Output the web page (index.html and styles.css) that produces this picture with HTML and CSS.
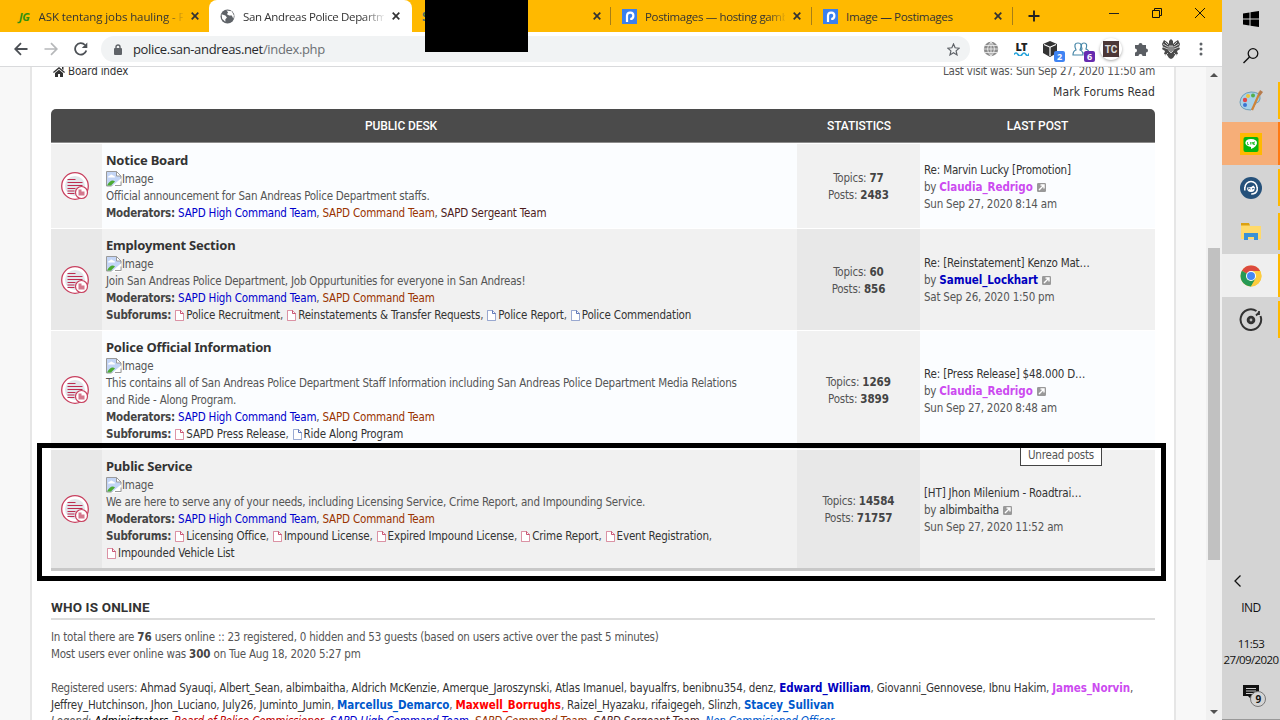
FILE: index.html
```html
<!DOCTYPE html>
<html lang="en">
<head>
    <meta charset="UTF-8">
    <meta name="viewport" content="width=device-width, initial-scale=1.0">
    <title>San Andreas Police Department</title>
    <link rel="stylesheet" href="styles.css">
</head>
<body>
    <!-- shared icons -->
    <svg class="defs" width="0" height="0">
        <symbol id="doc" viewBox="0 0 9 11"><path d="M.5.5h5l3 3v7h-8z" fill="#fff" stroke="currentColor" stroke-opacity=".5"/><path d="M5.5.5v3h3" fill="none" stroke="currentColor" stroke-opacity=".8"/></symbol>
        <symbol id="forum" viewBox="0 0 28 28">
            <circle cx="14" cy="14" r="13.3" fill="#fff" stroke="#c8405f" stroke-width="1.3"/>
            <circle cx="14" cy="14" r="10" fill="#e2e5ea"/>
            <path d="M6.500 7.500h8M6.500 10.500h15M6.500 13.500h15M6.500 16.500h8M6.500 19h7M6.500 21.500h7" stroke="#bd2c50" stroke-width="1.1"/>
            <circle cx="20.5" cy="20.5" r="6" fill="#fff" stroke="#c8405f" stroke-width="1.2"/>
            <path d="M17.500 17.500h3v2h3v4h-6z" fill="#d4788d"/>
        </symbol>
        <symbol id="broken" viewBox="0 0 16 16"><path d="M.5.5h10l4.500 4.500v10H.5z" fill="#c3d5f6" stroke="#9a9a9a"/><path d="M10.500.5V5H15z" fill="#fff" stroke="#9a9a9a"/><path d="M2 6.500q0-2 2-2 1-2 3 0 2 0 2 2z" fill="#fff"/><path d="M1 14.500q4-7 8-4l-4 4z" fill="#4dab33"/><path d="M5 16L15.500 7v9z" fill="#fff"/><path d="M9 14.500h6v-4" fill="none" stroke="#9a9a9a"/></symbol>
        <symbol id="view" viewBox="0 0 9 9"><rect width="9" height="9" rx="1.200" fill="#999"/><path d="M2 7l4.500-4.500M3.500 2h3.500v3.500" fill="none" stroke="#fff" stroke-width="1.400"/></symbol>
        <symbol id="close" viewBox="0 0 8 8"><path d="M.7.7l6.600 6.600M7.300.7L.7 7.300" stroke="#333" stroke-width="1.700"/></symbol>
        <symbol id="post" viewBox="0 0 15 15"><rect width="15" height="15" fill="#3b80ee"/><path d="M5 13V6.500a3.200 3.200 0 1 1 3.200 3.500" fill="none" stroke="#fff" stroke-width="2.200"/></symbol>
    </svg>

    <div class="screen">
        <div class="browser">
            <div class="tabs">
                <div class="tab first"><span class="jg">JG</span><span class="name fade-gold">ASK tentang jobs hauling - P</span><svg class="x"><use href="#close"/></svg></div>
                <div class="tab active">
                    <svg class="fav" viewBox="0 0 14 14"><circle cx="7" cy="7" r="6.500" fill="#5f6368"/><path d="M1.500 5l3.500 1 1.500 2-1.500 1.500V12L2 9zM6 1.500l1.500 1.500-1 2 2 1h2.500l1.500 3 .5-3-2-4z" fill="#fff"/></svg>
                    <span class="name fade-white">San Andreas Police Departm</span><svg class="x"><use href="#close"/></svg>
                </div>
                <div class="tab third"><span class="name">S</span><svg class="x"><use href="#close"/></svg></div>
                <div class="tab"><svg class="fav"><use href="#post"/></svg><span class="name fade-gold">Postimages — hosting gamb</span><svg class="x"><use href="#close"/></svg></div>
                <div class="tab"><svg class="fav"><use href="#post"/></svg><span class="name">Image — Postimages</span><svg class="x"><use href="#close"/></svg></div>
                <svg class="plus" viewBox="0 0 12 12"><path d="M6 .5v11M.5 6h11" stroke="#222" stroke-width="1.900"/></svg>
                <div class="window-buttons">
                    <svg width="10" height="10"><path d="M0 5.500h10" stroke="#222"/></svg>
                    <svg width="10" height="10"><path d="M.5 2.500h7v7h-7zM2.500 2V.5h7v7H8" fill="none" stroke="#111"/></svg>
                    <svg width="10" height="10"><path d="M0 0l10 10M10 0L0 10" stroke="#111"/></svg>
                </div>
            </div>
            <div class="toolbar">
                <svg class="nav" viewBox="0 0 14 14"><path d="M13.500 7H1.500M7 1.200L1.200 7 7 12.800" fill="none" stroke="#4c5055" stroke-width="1.800"/></svg>
                <svg class="nav" viewBox="0 0 14 14"><path d="M.5 7h12M7 1.200L12.800 7 7 12.800" fill="none" stroke="#b6b8ba" stroke-width="1.700"/></svg>
                <svg class="nav" viewBox="0 0 14 14"><path d="M12.300 8.500A5.700 5.700 0 1 1 11 3" fill="none" stroke="#4c5055" stroke-width="1.800"/><path d="M13.300.5v5.500H7.800z" fill="#4c5055"/></svg>
                <div class="address">
                    <svg width="8" height="11"><path d="M2 5V3a2 2 0 0 1 4 0v2" fill="none" stroke="#5f6368" stroke-width="1.400"/><rect y="4" width="8" height="7" rx="1" fill="#5f6368"/></svg>
                    <span class="url">police.san-andreas.net<i>/index.php</i></span>
                    <svg width="13" height="13" viewBox="0 0 13 13"><path d="M6.500 1l1.600 3.800 4.100.4-3.100 2.700.9 4-3.500-2.100L3 11.900l.9-4L.8 5.200l4.100-.4z" fill="none" stroke="#5f6368" stroke-width="1.200"/></svg>
                </div>
                <div class="extensions">
                    <svg viewBox="0 0 20 20"><circle cx="10" cy="10" r="7.200" fill="#8c8c8c"/><path d="M3 10h14M4 6.500h12M4 13.500h12M10 3v14M10 3q-7 7 0 14M10 3q7 7 0 14" fill="none" stroke="#f4f4f4" stroke-width=".8"/></svg>
                    <div class="lt">LT<svg width="15" height="4"><path d="M0 2.500q2-3 4 0t4 0 4 0 3-1" fill="none" stroke="#28a5dc" stroke-width="1.700"/></svg></div>
                    <div class="ext"><svg viewBox="0 0 20 20"><path d="M2 5l7-3 7 3v9l-7 4-7-4z" fill="#333"/><path d="M3 5.500l6 2.700 6-2.700M9 8.500V17" fill="none" stroke="#fff" stroke-width="1.200"/></svg><b class="badge">2</b></div>
                    <div class="ext"><svg viewBox="0 0 20 20"><g fill="#fff" stroke="#4787a8" stroke-width="1.200"><path d="M8 14q0-3 3-4-2-6 2-6 4 0 2 6 3 1 3 4z"/><path d="M2 16q0-4 3-5-3-7 2-7 5 0 2 7 3 1 3 5z"/></g></svg><b class="badge purple">6</b></div>
                    <div class="tc"><span>TC</span></div>
                    <svg viewBox="0 0 20 20"><path d="M4 6h3.500a2 2 0 1 1 4 0H15v3.500a2 2 0 1 1 0 4V17h-3.500a2 2 0 0 0-4 0H4v-3.500a2 2 0 0 0 0-4z" fill="#5a5e63"/></svg>
                    <svg viewBox="0 0 20 20"><path d="M10 0l2 2v3l2-2 3-2 2 4-1 3 1 2-3 2 1 3-3 1-2 3-2 1-2-1-2-3-3-1 1-3-3-2 1-2-1-3 2-4 3 2 2 2V2z" fill="#4a4a4a"/><path d="M2 5l5 3M2 8l5 2M18 5l-5 3M18 8l-5 2M7 14l-3 3M13 14l3 3M8 7h4v5l-2 2-2-2zM10 7v6M4 3l3 3M16 3l-3 3" fill="none" stroke="#d8d8d8" stroke-width=".9"/></svg>
                    <svg class="dots" viewBox="0 0 4 14"><g fill="#5f6368"><circle cx="2" cy="2" r="1.500"/><circle cx="2" cy="7" r="1.500"/><circle cx="2" cy="12" r="1.500"/></g></svg>
                </div>
            </div>

            <div class="viewport">
                <div class="page">
                    <div class="crumbs">
                        <span><svg class="home" viewBox="0 0 12 10"><path d="M6 0l6 5-.8 1L6 1.700.8 6 0 5zM9 0h1.500v3L9 2z" fill="#333"/><path d="M2 6l4-3.300L10 6v4H7V7H5v3H2z" fill="#333"/></svg><a>Board index</a></span>
                        <span class="visit">Last visit was: Sun Sep 27, 2020 11:50 am</span>
                    </div>
                    <div class="mark"><a>Mark Forums Read</a></div>

                    <div class="forums">
                        <div class="head"><span>PUBLIC DESK</span><span>STATISTICS</span><span>LAST POST</span></div>

                        <div class="row">
                            <div class="icon"><svg><use href="#forum"/></svg></div>
                            <div class="main">
                                <h3>Notice Board</h3>
                                <p><svg class="broken"><use href="#broken"/></svg>Image</p>
                                <p>Official announcement for San Andreas Police Department staffs.</p>
                                <p><b>Moderators:</b> <a class="high">SAPD High Command Team</a>, <a class="command">SAPD Command Team</a>, <a class="sergeant">SAPD Sergeant Team</a></p>
                            </div>
                            <div class="stats"><p>Topics: <b>77</b></p><p>Posts: <b>2483</b></p></div>
                            <div class="last"><p><a>Re: Marvin Lucky [Promotion]</a></p><p>by <b class="pink">Claudia_Redrigo</b> <svg class="view"><use href="#view"/></svg></p><p>Sun Sep 27, 2020 8:14 am</p></div>
                        </div>

                        <div class="row alt">
                            <div class="icon"><svg><use href="#forum"/></svg></div>
                            <div class="main">
                                <h3>Employment Section</h3>
                                <p><svg class="broken"><use href="#broken"/></svg>Image</p>
                                <p>Join San Andreas Police Department, Job Oppurtunities for everyone in San Andreas!</p>
                                <p><b>Moderators:</b> <a class="high">SAPD High Command Team</a>, <a class="command">SAPD Command Team</a></p>
                                <p class="subs"><b>Subforums:</b> <a><svg class="doc"><use href="#doc"/></svg>Police Recruitment</a>, <a><svg class="doc"><use href="#doc"/></svg>Reinstatements &amp; Transfer Requests</a>, <a><svg class="doc read"><use href="#doc"/></svg>Police Report</a>, <a><svg class="doc read"><use href="#doc"/></svg>Police Commendation</a></p>
                            </div>
                            <div class="stats"><p>Topics: <b>60</b></p><p>Posts: <b>856</b></p></div>
                            <div class="last"><p><a>Re: [Reinstatement] Kenzo Mat…</a></p><p>by <b class="blue">Samuel_Lockhart</b> <svg class="view"><use href="#view"/></svg></p><p>Sat Sep 26, 2020 1:50 pm</p></div>
                        </div>

                        <div class="row">
                            <div class="icon"><svg><use href="#forum"/></svg></div>
                            <div class="main">
                                <h3>Police Official Information</h3>
                                <p><svg class="broken"><use href="#broken"/></svg>Image</p>
                                <p>This contains all of San Andreas Police Department Staff Information including San Andreas Police Department Media Relations<br>and Ride - Along Program.</p>
                                <p><b>Moderators:</b> <a class="high">SAPD High Command Team</a>, <a class="command">SAPD Command Team</a></p>
                                <p class="subs"><b>Subforums:</b> <a><svg class="doc"><use href="#doc"/></svg>SAPD Press Release</a>, <a><svg class="doc read"><use href="#doc"/></svg>Ride Along Program</a></p>
                            </div>
                            <div class="stats"><p>Topics: <b>1269</b></p><p>Posts: <b>3899</b></p></div>
                            <div class="last"><p><a>Re: [Press Release] $48.000 D…</a></p><p>by <b class="pink">Claudia_Redrigo</b> <svg class="view"><use href="#view"/></svg></p><p>Sun Sep 27, 2020 8:48 am</p></div>
                        </div>

                        <div class="row alt">
                            <div class="icon"><svg><use href="#forum"/></svg></div>
                            <div class="main">
                                <h3>Public Service</h3>
                                <p><svg class="broken"><use href="#broken"/></svg>Image</p>
                                <p>We are here to serve any of your needs, including Licensing Service, Crime Report, and Impounding Service.</p>
                                <p><b>Moderators:</b> <a class="high">SAPD High Command Team</a>, <a class="command">SAPD Command Team</a></p>
                                <p class="subs"><b>Subforums:</b> <a><svg class="doc"><use href="#doc"/></svg>Licensing Office</a>, <a><svg class="doc"><use href="#doc"/></svg>Impound License</a>, <a><svg class="doc"><use href="#doc"/></svg>Expired Impound License</a>, <a><svg class="doc"><use href="#doc"/></svg>Crime Report</a>, <a><svg class="doc"><use href="#doc"/></svg>Event Registration</a>,<br><a><svg class="doc"><use href="#doc"/></svg>Impounded Vehicle List</a></p>
                            </div>
                            <div class="stats"><p>Topics: <b>14584</b></p><p>Posts: <b>71757</b></p></div>
                            <div class="last"><p><a>[HT] Jhon Milenium - Roadtrai…</a></p><p>by <a>albimbaitha</a> <svg class="view"><use href="#view"/></svg></p><p>Sun Sep 27, 2020 11:52 am</p></div>
                        </div>
                    </div>

                    <h2>WHO IS ONLINE</h2>
                    <div class="online">
                        <p>In total there are <b>76</b> users online :: 23 registered, 0 hidden and 53 guests (based on users active over the past 5 minutes)</p>
                        <p>Most users ever online was <b>300</b> on Tue Aug 18, 2020 5:27 pm</p>
                        <p class="users">Registered users: <a>Ahmad Syauqi</a>, <a>Albert_Sean</a>, <a>albimbaitha</a>, <a>Aldrich McKenzie</a>, <a>Amerque_Jaroszynski</a>, <a>Atlas Imanuel</a>, <a>bayualfrs</a>, <a>benibnu354</a>, <a>denz</a>, <b class="blue">Edward_William</b>, <a>Giovanni_Gennovese</a>, <a>Ibnu Hakim</a>, <b class="pink">James_Norvin</b>,<br><a>Jeffrey_Hutchinson</a>, <a>Jhon_Luciano</a>, <a>July26</a>, <a>Juminto_Jumin</a>, <b class="azure">Marcellus_Demarco</b>, <b class="red">Maxwell_Borrughs</b>, <a>Raizel_Hyazaku</a>, <a>rifaigegeh</a>, <a>Slinzh</a>, <b class="azure">Stacey_Sullivan</b></p>
                        <p class="legend">Legend: <a class="admin">Administrators</a>, <a class="board">Board of Police Commissioner</a>, <a class="high">SAPD High Command Team</a>, <a class="command">SAPD Command Team</a>, <a class="sergeant">SAPD Sergeant Team</a>, <a class="azure">Non Commisioned Officer</a></p>
                    </div>
                </div>
                <div class="scrollbar"><span class="up"></span><span class="thumb"></span><span class="down"></span></div>
            </div>
        </div>

        <div class="taskbar">
            <div class="item start"><svg width="16" height="16"><path d="M0 2.500L6.500 1.500v6H0zM7.500 1.300L16 0v7.500H7.500zM0 8.500h6.500v6L0 13.500zM7.500 8.500H16V16l-8.500-1.300z"/></svg></div>
            <div class="item search"><svg width="16" height="16"><circle cx="10" cy="5.500" r="4.800" fill="none" stroke="#111" stroke-width="1.300"/><path d="M6.500 9L.5 15" stroke="#111" stroke-width="1.400"/></svg></div>
            <div class="item open"><svg width="24" height="24" viewBox="0 0 24 24"><path d="M1 13Q2 4 12 3q10 0 9 7-1 4-4 4-2 4-5 7-11 0-11-8z" fill="#a9d2e8" stroke="#6c9eb9"/><circle cx="6" cy="11" r="2.200" fill="#e04848"/><circle cx="9" cy="7" r="2" fill="#eec43c"/><circle cx="14" cy="6.500" r="2" fill="#53af4c"/><circle cx="6" cy="16" r="2" fill="#3a75d2"/><path d="M21 3L13 21" stroke="#cf8438" stroke-width="2.200"/><path d="M19 6l2-5 3 2-3 4z" fill="#b67b4c"/></svg></div>
            <div class="item open line"><svg width="22" height="22"><rect width="22" height="22" fill="#ffb900"/><rect x="3.500" y="4" width="15" height="15" rx="2" fill="#06b50e"/><path d="M11 6c8 0 8 7 0 10v-2c-8-1-7-8 0-8z" fill="#fff"/><path d="M7.500 9v2.500H9M10.500 9v2.500M12 11.500V9l1.500 2.500V9M15 9h-1v2.500h1" fill="none" stroke="#06b50e" stroke-width=".7"/></svg></div>
            <div class="item open"><svg width="22" height="22"><circle cx="11" cy="11" r="11" fill="#25517a"/><path d="M5 10.500a6 6 0 0 1 12 0" fill="none" stroke="#fff" stroke-width="1.500"/><path d="M7 10.500q4 .5 6.500-2l1.500 2q0 4.500-4 4.500t-4-4.500z" fill="#fff"/><path d="M8 12q1.500-1 2.500 0M12 12q1.500-1 2.500 0" fill="none" stroke="#25517a"/><path d="M4.800 10v3.500M17.200 10v3q-1 4-6 4" fill="none" stroke="#fff" stroke-width="1.500"/></svg></div>
            <div class="item open"><svg width="20" height="18"><path d="M0 1h8l1 2h11v13H0z" fill="#ffda6b"/><path d="M0 0h8l1 2.500H0z" fill="#dba011"/><path d="M3 17v-7h14v7h-4v-3H7v3z" fill="#3991d7"/></svg></div>
            <div class="item open chrome"><svg width="22" height="22" viewBox="0 0 22 22"><circle cx="11" cy="11" r="10.500" fill="#fccb3e"/><path d="M11 11L1.900 5.800a10.500 10.500 0 0 1 18.200 0z" fill="#dc4a3e"/><path d="M11 11L1.900 5.800A10.500 10.500 0 0 0 11 21.500l4.500-8z" fill="#269955"/><path d="M11 6h9.200A10.500 10.500 0 0 1 11 21.500l5-8z" fill="#fccb3e"/><circle cx="11" cy="11" r="5" fill="#fff"/><circle cx="11" cy="11" r="4" fill="#4587f4"/></svg></div>
            <div class="item open"><svg width="24" height="24" viewBox="0 0 24 24"><path d="M17.500 3A10.300 10.300 0 1 0 21.500 8" fill="none" stroke="#333" stroke-width="2"/><path d="M17 7.500l3.500-3.500M20 3v4" fill="none" stroke="#333" stroke-width="1.800"/><circle cx="12" cy="12" r="4.300" fill="#333"/><circle cx="12" cy="12" r="1.400" fill="#bbb"/></svg></div>
            <div class="tray">
                <svg class="chevron" width="7" height="12"><path d="M6.500.5L1 6l5.500 5.500" fill="none" stroke="#111" stroke-width="1.300"/></svg>
                <span>IND</span>
                <span class="clock">11:53<br>27/09/2020</span>
                <div class="note"><svg width="16" height="14"><path d="M0 0h16v11h-8v3l-3-3H0z" fill="#111"/><path d="M3 3.500h10M3 6h10M3 8.500h7" stroke="#ccc"/></svg><b>9</b></div>
            </div>
        </div>

        <div class="tooltip">Unread posts</div>
        <div class="frame"></div>
        <div class="cover"></div>
    </div>
</body>
</html>
```
FILE: styles.css
```css
* { box-sizing: border-box; }
body { margin: 0; font-family: "DejaVu Sans Condensed", "DejaVu Sans", sans-serif; font-stretch: condensed; font-size: 11.5px; }
p, h2, h3 { margin: 0; }
svg { display: block; flex: none; }
.defs { position: absolute; }
.screen { position: relative; display: flex; width: 1280px; height: 720px; overflow: hidden; }
.browser { width: 1222px; display: flex; flex-direction: column; }

/* tabs */
.tabs { height: 32px; background: #ffb900; display: flex; align-items: center; font-family: "Open Sans", sans-serif; font-stretch: normal; font-size: 11.5px; letter-spacing: -0.35px; color: #333; }
.tab { width: 201px; height: 32px; padding: 0 11px; display: flex; align-items: center; position: relative; }
.tab .name { flex: 1; white-space: nowrap; overflow: hidden; margin: 0 8px; }
.tab .fav { width: 15px; height: 15px; }
.tab .x { width: 8px; height: 8px; }
.tab:nth-child(n+3)::after { content: ""; position: absolute; right: 0; top: 7px; width: 1px; height: 18px; background: #a77e17; }
.tab.first { width: 209px; padding: 0 10px 0 19px; border-bottom-right-radius: 8px; }
.tab.first .name { margin-left: 9px; letter-spacing: -0.1px; }
.tab.active { width: 203px; padding: 0 12px 0 11px; background: #fff; border-radius: 8px 8px 0 0; }
.tab.third { width: 199px; padding: 0 10px 0 2px; border-bottom-left-radius: 8px; }
.tab.third .name { color: #4b735a; font-weight: bold; }
.tab:nth-child(5) .name { letter-spacing: -0.3px; }
.jg { color: #309010; font-weight: bold; font-style: italic; font-size: 11px; }
.fade-gold { -webkit-mask-image: linear-gradient(to right, #000 88%, rgba(0, 0, 0, 0.1)); }
.fade-white { -webkit-mask-image: linear-gradient(to right, #000 85%, rgba(0, 0, 0, 0.1)); }
.plus { width: 12px; height: 12px; margin-left: 15px; }
.window-buttons { display: flex; gap: 33px; margin-left: auto; margin-right: 17px; padding-bottom: 6px; }

.toolbar { height: 35px; background: #fff; border-bottom: 1px solid #d9dadc; display: flex; align-items: center; padding: 0 14px; font-stretch: normal; }
.nav { width: 14px; height: 14px; margin-right: 16px; }
.address { width: 869px; height: 26px; margin-left: -3px; border-radius: 13px; background: #f1f3f4; display: flex; align-items: center; padding: 0 10px 0 13px; }
.url { flex: 1; margin-left: 11px; font-family: "Open Sans", sans-serif; font-size: 13px; letter-spacing: -0.34px; color: #27292c; }
.url i { font-style: normal; color: #6b6f73; }
.extensions { display: flex; align-items: center; gap: 10px; margin-left: 11px; }
.extensions > svg, .ext svg { width: 20px; height: 20px; }
.extensions .dots { width: 4px; height: 14px; margin-left: 8px; }
.lt { width: 20px; height: 16px; text-align: center; font: 800 11px/11px "Open Sans", sans-serif; letter-spacing: -1px; color: #222; }
.lt svg { margin: 0 auto; }
.ext { position: relative; }
.badge { position: absolute; right: -4px; bottom: -3px; width: 11px; height: 11px; border-radius: 2px; background: #3f84f3; color: #fff; font: bold 9px/11px "Open Sans", sans-serif; text-align: center; }
.badge.purple { background: #662bb0; }
.tc { width: 22px; height: 22px; margin: 0 -1px; border-radius: 50%; background: #fff; box-shadow: 0 1px 3px #aaa; display: flex; align-items: center; justify-content: center; }
.tc span { width: 16px; height: 16px; background: #4b3737; color: #ddd; font: bold 10px/18px Roboto, sans-serif; text-align: center; }

/* forum page */
.viewport { flex: 1; min-height: 0; display: flex; background: #f8f8f8; overflow: hidden; }
.page { width: 1146px; margin-left: 30px; margin-right: 30px; padding: 0 19px; border: solid #e6e6e6; border-width: 0 2px; background: #fff; color: #555; line-height: 17px; white-space: nowrap; flex: none; letter-spacing: -0.22px; }
.page a { color: #333; letter-spacing: -0.17px; }
.page b { color: #444; letter-spacing: -0.05px; }
.page .main b { letter-spacing: -0.22px; }
.page p { min-height: 17px; }
.crumbs { display: flex; justify-content: space-between; margin-top: -4px; }
.crumbs > span { display: flex; align-items: center; }
.home { width: 12px; height: 10px; margin: 0 3px 0 2px; }
.mark { text-align: right; margin-top: 4px; height: 25px; font-size: 12px; }
.mark a { letter-spacing: 0.1px; }
.head { height: 34px; border-bottom: 1px solid #8c8c8c; border-radius: 5px 5px 0 0; background: #4b4b4b; color: #fff; font: 500 12px/34px Roboto, sans-serif; letter-spacing: -0.1px; display: grid; grid-template-columns: 700px 216px 141px; text-align: center; margin-bottom: 1px; }
.row { display: grid; grid-template-columns: 51px 695px 123px 1fr; background: #fbfdff; margin-bottom: 1px; }
.row.alt { background: #f1f1f1; }
.row:last-child { border-bottom: 3px solid #c8c8c8; margin: 0; }
.icon, .stats { background: #f1f1f1; }
.alt .icon, .alt .stats { background: #e8e8e8; }
.icon { display: flex; align-items: center; padding-left: 10px; }
.icon svg { width: 28px; height: 28px; }
.main { padding: 6px 4px; }
h3 { font: bold 13px/20px "Noto Sans", sans-serif; height: 21px; letter-spacing: -0.2px; color: #333; }
.broken { display: inline-block; width: 16px; height: 16px; vertical-align: -4px; }
.main p { height: 17px; }
.main p:has(br) { height: 34px; }
.doc { display: inline-block; width: 9px; height: 11px; margin: 0 2px 0 1px; vertical-align: -2px; color: #bd2c50; }
.doc.read { color: #3a57a8; }
.stats, .last { display: flex; flex-direction: column; justify-content: center; padding-top: 2px; }
.stats { text-align: center; }
.last { padding-left: 4px; }
.view { display: inline-block; width: 9px; height: 9px; margin-left: 1px; vertical-align: -1px; }
.page .high { color: #0000cc; }
.page .command { color: #993300; }
.page .sergeant { color: #4d1c1c; }
.page .pink { color: #cc4bf0; }
.page .blue { color: #0000bf; }
.page .azure { color: #0059cc; }
.page .red { color: #ff0000; }
.page .board { color: #c00000; }
.page .admin { color: #000; }
h2 { margin-top: 23px; height: 26px; border-bottom: 2px solid #dcdcdc; font: bold 13.5px/26px Roboto, sans-serif; letter-spacing: 0.15px; color: #333; }
.online { padding-top: 9px; }
.users { margin-top: 17px; }
.legend { font-style: italic; margin-top: -1px; }

.scrollbar { width: 16px; background: #f1f1f1; padding: 6px 2px; display: flex; flex-direction: column; align-items: center; }
.up, .down { border: 4px solid transparent; }
.up { border-top: 0; border-bottom-color: #505050; }
.down { border-bottom: 0; border-top-color: #505050; margin-top: auto; }
.thumb { width: 12px; height: 312px; margin-top: 171px; background: #c1c1c1; }

/* windows taskbar */
.taskbar { width: 58px; background: #d4d4d4; display: flex; flex-direction: column; border-bottom: 1px solid #999; font-stretch: normal; }
.item { height: 44px; display: flex; align-items: center; justify-content: center; padding-left: 2px; border-right: 2px solid transparent; }
.item.start { height: 37px; }
.item.search { height: 38px; }
.item.open { border-right-color: #ffb900; background-clip: padding-box; margin-top: 7px; height: 37px; }
.item.open.line { height: 43px; margin-top: 3px; background-color: #f6ae78; border-right-color: #ff7a12; }
.item.open.line + .item { margin-top: 4px; }
.item.open.chrome { height: 43px; margin-top: 4px; background-color: #efefef; }
.item.open:has(+ .tray) { margin-top: 4px; height: 37px; }
.tray { margin-top: auto; display: flex; flex-direction: column; align-items: center; font-family: "Open Sans", sans-serif; font-size: 12px; letter-spacing: -0.5px; line-height: 16px; color: #111; height: 144px; }
.chevron { margin-right: 28px; }
.tray span { margin-top: 13px; }
.tray .clock { margin-top: 20px; text-align: center; font-size: 11.5px; letter-spacing: -0.6px; }
.note { position: relative; margin-top: 17px; }
.note b { position: absolute; left: 7px; top: 6px; width: 16px; height: 16px; border: 1px solid #777; border-radius: 50%; background: #d4d4d4; font-size: 10px; line-height: 14px; text-align: center; }

/* overlays */
.tooltip { position: absolute; left: 1020px; top: 443px; width: 82px; height: 23px; border: 1px solid #444; background: #fff; color: #555; text-align: center; line-height: 22px; letter-spacing: -0.2px; }
.frame { position: absolute; left: 37px; top: 443px; width: 1129px; height: 138px; border: 5px solid #000; }
.cover { position: absolute; left: 425px; top: 0; width: 103px; height: 52px; background: #000; }
```
